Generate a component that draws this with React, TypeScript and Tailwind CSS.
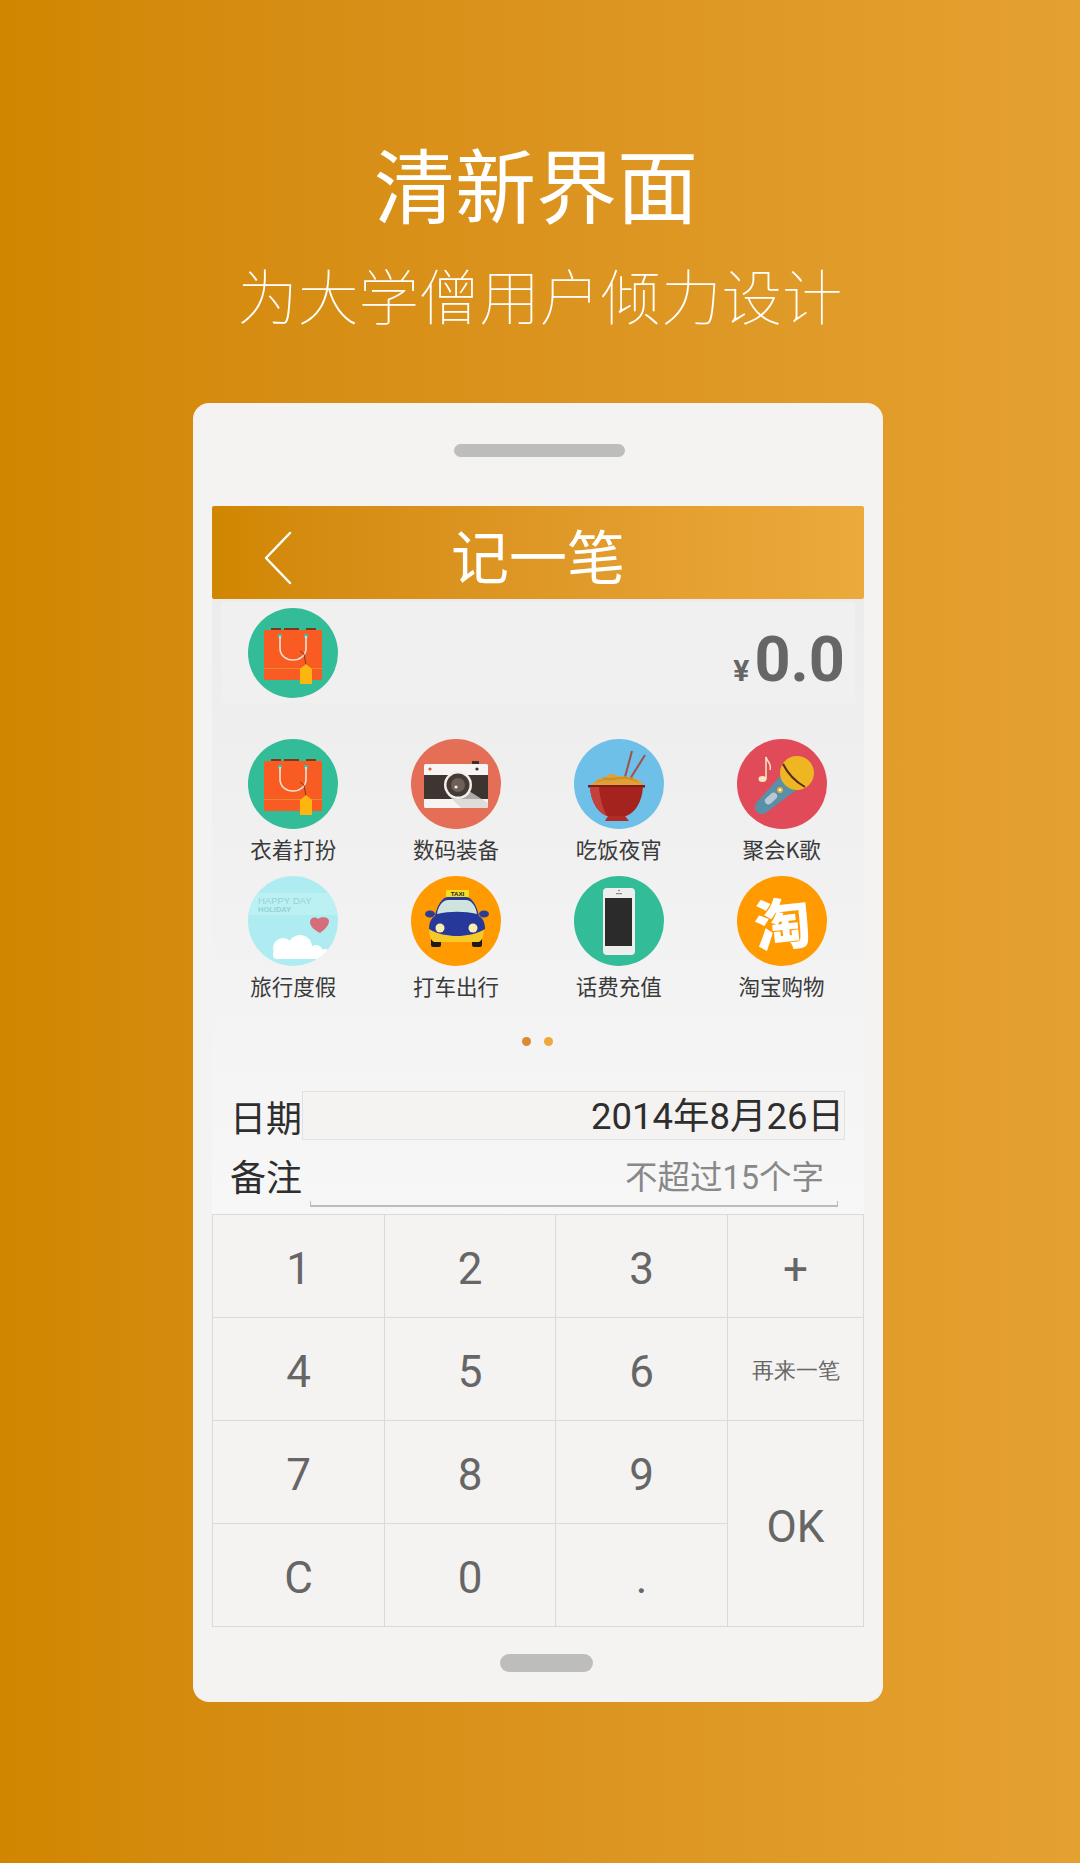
const cjk = "font-['Noto_Sans_CJK_SC',sans-serif]";

function BagIcon() {
  return (
    <svg viewBox="0 0 90 90" className="w-full h-full">
      <circle cx="45" cy="45" r="45" fill="#32bd98" />
      <rect x="23" y="20" width="10" height="3" fill="#7a3a20" />
      <rect x="36" y="20" width="15" height="3" fill="#7a3a20" />
      <rect x="58" y="20" width="10" height="3" fill="#7a3a20" />
      <rect x="16" y="22" width="58" height="50" rx="1" fill="#f85c22" />
      <rect x="16" y="60" width="58" height="1" fill="#e9a13a" opacity="0.6" />
      <circle cx="32" cy="28" r="2.2" fill="#4fb9a4" />
      <circle cx="58" cy="28" r="2.2" fill="#4fb9a4" />
      <path d="M32 28v12c0 16 26 16 26 0V28" fill="none" stroke="#f5e3d6" strokeWidth="1.6" />
      <path d="M52 43l4 3 2 11" fill="none" stroke="#6a2a10" strokeWidth="0.8" />
      <path d="M52 61l6-5 6 5v15H52z" fill="#fdb60f" />
    </svg>
  );
}

function CameraIcon() {
  return (
    <svg viewBox="0 0 90 90" className="w-full h-full">
      <circle cx="45" cy="45" r="45" fill="#e56e56" />
      <rect x="61" y="22" width="7" height="3" fill="#3a302c" />
      <rect x="13" y="25" width="64" height="44" rx="1.5" fill="#f7f5f3" />
      <rect x="13" y="36" width="64" height="24" fill="#3e3531" />
      <circle cx="19" cy="30" r="1.6" fill="#e0563e" />
      <circle cx="66" cy="30" r="1.6" fill="#3a302c" />
      <path d="M37 56l13 13h27v-5L58 52z" fill="#d5d2cf" opacity="0.75" />
      <circle cx="47" cy="46" r="14" fill="#f2efec" />
      <circle cx="47" cy="46" r="11.5" fill="#453b36" />
      <circle cx="47" cy="46" r="7" fill="#6e5f57" />
      <circle cx="45" cy="48" r="1.6" fill="#eee" />
    </svg>
  );
}

function BowlIcon() {
  return (
    <svg viewBox="0 0 90 90" className="w-full h-full">
      <circle cx="45" cy="45" r="45" fill="#6fc0e8" />
      <path d="M51 38L58 12" stroke="#a0514a" strokeWidth="2" />
      <path d="M56 40L71 16" stroke="#a0514a" strokeWidth="2" />
      <path d="M18 46c3-6 12-8 16-9 3-3 6-3 8 0 8 0 24 1 27 9z" fill="#dfa038" />
      <path d="M22 43c8-4 14-1 20-3s14-1 22 3M28 39c8 2 20-2 32 1" fill="none" stroke="#c98520" strokeWidth="0.8" />
      <rect x="14" y="46" width="57" height="2.5" fill="#7f1c18" />
      <path d="M16 48h53c-1 15-8 26-17 29H33c-9-3-16-14-17-29z" fill="#a4231f" />
      <path d="M16 48h9c1 12 4 22 8 29-9-3-16-14-17-29z" fill="#c2423a" />
      <path d="M34 77h17l4 5H31z" fill="#b12a24" />
    </svg>
  );
}

function MicIcon() {
  return (
    <svg viewBox="0 0 90 90" className="w-full h-full">
      <circle cx="45" cy="45" r="45" fill="#e14b59" />
      <path d="M47 33L20 63a6.5 6.5 0 0 0 10 10l32-24z" fill="#5890a8" />
      <rect x="27" y="56" width="14" height="7" rx="3.5" transform="rotate(-42 34 59.5)" fill="#b9c9d2" />
      <circle cx="43" cy="51" r="3" fill="#f0a83c" />
      <circle cx="43" cy="51" r="1.3" fill="#fff" />
      <circle cx="60" cy="34" r="17" fill="#eeb622" />
      <path d="M46 25c5 10 13 18 22 23" fill="none" stroke="#5a2a1c" strokeWidth="2" />
      <path d="M29 18v22" stroke="#f6e6c0" strokeWidth="1.5" />
      <ellipse cx="25.5" cy="40" rx="4" ry="3" fill="#f6e6c0" />
      <path d="M29 18c1 5 6 6 4 13" fill="none" stroke="#f6e6c0" strokeWidth="1.5" />
    </svg>
  );
}

function HolidayIcon() {
  return (
    <svg viewBox="0 0 90 90" className="w-full h-full">
      <defs>
        <clipPath id="holiday-clip">
          <circle cx="45" cy="45" r="45" />
        </clipPath>
      </defs>
      <g clipPath="url(#holiday-clip)">
        <rect width="90" height="90" fill="#aeecf2" />
        <rect y="17" width="90" height="22" fill="#bdf0f3" />
        <text x="10" y="28" fontSize="9.5" fill="#8ed4d8" fontFamily="Liberation Sans, sans-serif">HAPPY DAY</text>
        <text x="10" y="36" fontSize="7.5" fontWeight="700" fill="#8ed4d8" fontFamily="Liberation Sans, sans-serif">HOLIDAY</text>
        <path d="M72 57c-6-3-10-7-10-11 0-4 5-6 8-3 3-3 11-2 11 2 0 5-5 9-9 12z" fill="#d66d7a" />
        <circle cx="35" cy="72" r="10" fill="#fff" />
        <circle cx="52" cy="71" r="12" fill="#fff" />
        <circle cx="68" cy="76" r="7" fill="#fff" />
        <circle cx="77" cy="78" r="5" fill="#fff" />
        <rect x="25" y="74" width="56" height="9" rx="4" fill="#fff" />
      </g>
    </svg>
  );
}

function TaxiIcon() {
  return (
    <svg viewBox="0 0 90 90" className="w-full h-full">
      <circle cx="45" cy="45" r="45" fill="#ff9b00" />
      <rect x="35" y="14" width="23" height="7" rx="1" fill="#f8de24" />
      <text x="46.5" y="20" fontSize="6.2" fontWeight="700" textAnchor="middle" fill="#222" fontFamily="Liberation Sans, sans-serif">TAXI</text>
      <rect x="20" y="62" width="10" height="9" rx="2" fill="#1d1a18" />
      <rect x="61" y="62" width="10" height="9" rx="2" fill="#1d1a18" />
      <ellipse cx="19" cy="38" rx="5" ry="3.5" fill="#2c3e93" />
      <ellipse cx="73" cy="38" rx="5" ry="3.5" fill="#2c3e93" />
      <path d="M18 50c0 8 1 14 5 16h45c4-2 5-8 5-16z" fill="#f6c92a" />
      <path d="M24 40c2-10 7-19 13-19h18c6 0 11 9 13 19 4 2 6 7 6 13-8 5-19 7-28 7s-20-2-28-7c0-6 2-11 6-13z" fill="#26389a" />
      <path d="M26 38c1-8 6-14 11-14h18c5 0 10 6 11 14-13-3-27-3-40 0z" fill="#cfe3df" />
      <circle cx="29" cy="52" r="4.5" fill="#fbeeb0" />
      <circle cx="62" cy="52" r="4.5" fill="#fbeeb0" />
    </svg>
  );
}

function PhoneIcon() {
  return (
    <svg viewBox="0 0 90 90" className="w-full h-full">
      <circle cx="45" cy="45" r="45" fill="#32bd98" />
      <rect x="29" y="12" width="32" height="67" rx="4" fill="#eeeeee" />
      <rect x="31" y="22" width="27" height="48" fill="#2b2b2b" />
      <rect x="42" y="17" width="6" height="1.2" fill="#888" />
      <circle cx="45" cy="14.5" r="0.8" fill="#666" />
    </svg>
  );
}

function TaobaoIcon() {
  return (
    <div className={`w-full h-full rounded-full bg-[#ff9b00] flex items-center justify-center text-white text-[56px] font-black leading-none ${cjk}`}>
      <span className="-rotate-6">淘</span>
    </div>
  );
}

const categories = [
  { label: '衣着打扮', icon: <BagIcon /> },
  { label: '数码装备', icon: <CameraIcon /> },
  { label: '吃饭夜宵', icon: <BowlIcon /> },
  { label: '聚会K歌', icon: <MicIcon /> },
  { label: '旅行度假', icon: <HolidayIcon /> },
  { label: '打车出行', icon: <TaxiIcon /> },
  { label: '话费充值', icon: <PhoneIcon /> },
  { label: '淘宝购物', icon: <TaobaoIcon /> },
];

const keyClass = "flex items-center justify-center pt-[6px] border-[#dadada] border-r border-b text-[#666] text-[44px] font-['Roboto',sans-serif]";
const keys = ['1', '2', '3', '+', '4', '5', '6', '再来一笔', '7', '8', '9', 'OK', 'C', '0', '.'];

export default function App() {
  return (
    <div className={`w-[1080px] h-[1863px] overflow-hidden bg-gradient-to-r from-[#d18600] to-[#e5a130] flex flex-col items-center ${cjk}`}>
      <h1 className="mt-[132px] mr-[8px] text-[81px] leading-[100px] font-normal text-white h-[100px]">清新界面</h1>
      <p className="mt-[22px] text-[60.5px] leading-[80px] font-thin text-white h-[80px]">为大学僧用户倾力设计</p>

      <div className="mt-[69px] mr-[4px] w-[690px] h-[1299px] rounded-[16px] bg-[#f4f3f1] px-[19px] flex flex-col">
        <div className="mt-[41px] ml-[242px] w-[171px] h-[13px] rounded-full bg-[#bdbdbb]" />

        <header className="mt-[49px] h-[93px] rounded-[2px] bg-gradient-to-r from-[#d18600] to-[#ecaa3c] relative flex items-center justify-center text-white text-[58px] leading-none">
          <svg viewBox="0 0 30 54" className="absolute left-[51px] top-[25px] w-[30px] h-[54px]" fill="none" stroke="#fff" strokeWidth="2.5" strokeLinecap="round" strokeLinejoin="round">
            <path d="M27 2L3 27l24 25" />
          </svg>
          <span className="mt-[3px]">记一笔</span>
        </header>

        <section className="bg-gradient-to-b from-[#ececec] to-[#f7f7f7] h-[615px] flex flex-col">
          <div className="mt-[3px] mx-[9px] h-[101px] bg-[#f0f0f0] flex items-center justify-between pl-[27px] pr-[10px]">
            <div className="w-[90px] h-[90px]">
              <BagIcon />
            </div>
            <div className="flex items-baseline text-[#666] font-bold font-['Roboto',sans-serif] mt-[16px]">
              <span className="text-[30px] mr-[5px]">¥</span>
              <span className="text-[63px] leading-none">0.0</span>
            </div>
          </div>

          <div className="mt-[36px] pr-[1px] grid grid-cols-4">
            {categories.map((cat) => (
              <div key={cat.label} className="h-[137px] flex flex-col items-center">
                <div className="w-[90px] h-[90px]">{cat.icon}</div>
                <span className="mt-[5px] text-[21.5px] leading-[30px] text-[#3a3a3a]">{cat.label}</span>
              </div>
            ))}
          </div>

          <div className="mt-[24px] flex justify-center gap-[13px] ml-[-2px]">
            <span className="w-[9px] h-[9px] rounded-full bg-[#dc8a33]" />
            <span className="w-[9px] h-[9px] rounded-full bg-[#ecaa3c]" />
          </div>

          <div className="mt-[45px] h-[49px] flex items-center pl-[18px] pr-[19px]">
            <span className="w-[72px] text-[36px] leading-none text-[#2e2e2e]">日期</span>
            <div className="flex-1 h-[49px] border border-[#e2e2e2] bg-[#f4f3f2] flex items-center justify-end pt-[4px] text-[36.5px] leading-none text-[#2e2e2e] font-['Roboto','Noto_Sans_CJK_SC',sans-serif]">
              2014年8月26日
            </div>
          </div>

          <div className="mt-[8px] h-[59px] flex items-start pl-[18px]">
            <span className="w-[72px] mt-[5px] text-[36px] leading-[44px] text-[#2e2e2e]">备注</span>
            <div className="ml-[8px] w-[528px] h-[59px] flex flex-col">
              <div className="pr-[14px] pt-[8px] text-right text-[32.5px] leading-[44px] text-[#888] font-['Roboto','Noto_Sans_CJK_SC',sans-serif]">
                不超过15个字
              </div>
              <div className="mt-auto h-[6px] border-x border-b-2 border-[#bcbcbc]" />
            </div>
          </div>
        </section>

        <div className="grid grid-cols-[172px_171px_172px_136px] grid-rows-[103px_103px_103px_103px] border-t border-l border-[#dadada]">
          {keys.map((key) => {
            if (key === 'OK') {
              return <div key={key} className={`${keyClass} row-span-2`}>OK</div>;
            }
            if (key === '再来一笔') {
              return <div key={key} className={`${keyClass} !pt-[2px] !text-[22px] ${cjk}`}>{key}</div>;
            }
            return <div key={key} className={keyClass}>{key}</div>;
          })}
        </div>

        <div className="mt-[27px] ml-[288px] w-[93px] h-[18px] rounded-full bg-[#bdbdbb]" />
      </div>
    </div>
  );
}
